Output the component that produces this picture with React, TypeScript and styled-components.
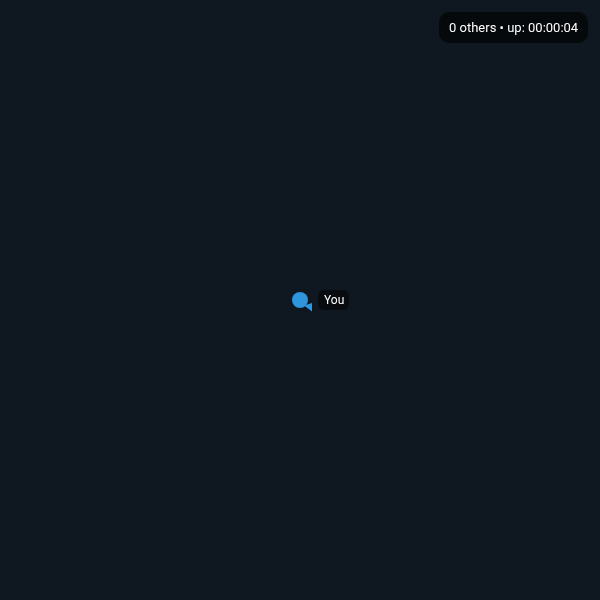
import React from 'react'
import styled, { createGlobalStyle } from 'styled-components'

const Global = createGlobalStyle`
  html, body {
    margin: 0;
    padding: 0;
    background: #0f1720;
  }
`

const Stage = styled.div`
  position: relative;
  width: 600px;
  height: 600px;
  overflow: hidden;
  background: #0f1720;
  font-family: Roboto, 'Liberation Sans', sans-serif;
  color: #fff;
`

const Status = styled.div`
  position: absolute;
  top: 12px;
  right: 12px;
  height: 31px;
  padding: 0 10px;
  display: flex;
  align-items: center;
  border-radius: 10px;
  background: rgba(0, 0, 0, 0.6);
  font-size: 13px;
  white-space: nowrap;
  will-change: transform;
`

const Player = styled.div`
  position: absolute;
  left: 292px;
  top: 292px;
  width: 16px;
  height: 16px;
`

const Label = styled.div`
  position: absolute;
  left: 26px;
  top: -2px;
  height: 20px;
  padding: 0 5px 0 6px;
  display: flex;
  align-items: center;
  border-radius: 6px;
  background: rgba(0, 0, 0, 0.45);
  font-size: 12px;
  white-space: nowrap;
  will-change: transform;
`

const Marker = styled.svg`
  position: absolute;
  left: 0;
  top: 0;
  overflow: visible;
`

export default function App() {
  return (
    <Stage>
      <Global />
      <Status>0 others • up: 00:00:04</Status>
      <Player>
        <Marker width="22" height="22" viewBox="0 0 22 22">
          <circle cx="8" cy="8" r="8" fill="#2f95dc" />
          <polygon points="12,13.5 20,11 20,19.5" fill="#2f95dc" />
        </Marker>
        <Label>You</Label>
      </Player>
    </Stage>
  )
}
